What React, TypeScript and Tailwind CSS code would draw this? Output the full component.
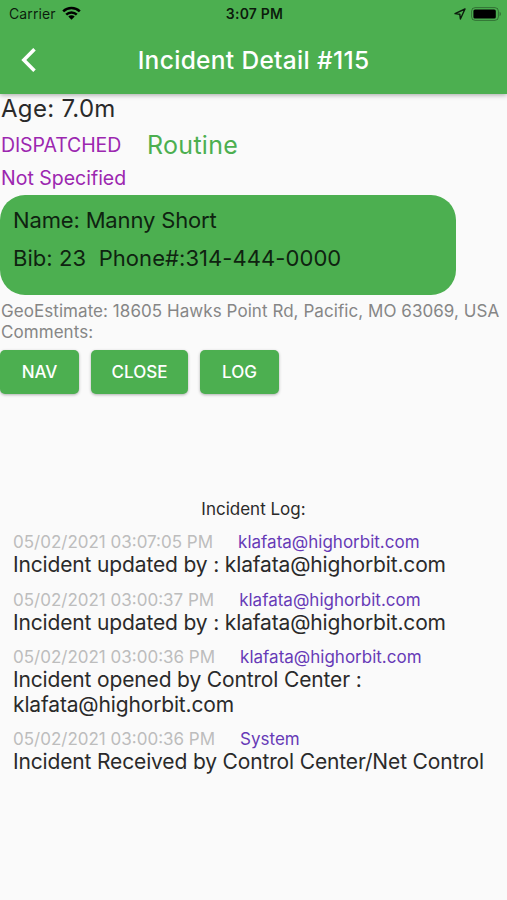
interface LogEntry {
  id: number
  time: string
  user: string
  message: string
}

const logEntries: LogEntry[] = [
  {
    id: 1,
    time: "05/02/2021 03:07:05 PM",
    user: "klafata@highorbit.com",
    message: "Incident updated by : klafata@highorbit.com",
  },
  {
    id: 2,
    time: "05/02/2021 03:00:37 PM",
    user: "klafata@highorbit.com",
    message: "Incident updated by : klafata@highorbit.com",
  },
  {
    id: 3,
    time: "05/02/2021 03:00:36 PM",
    user: "klafata@highorbit.com",
    message: "Incident opened by Control Center : klafata@highorbit.com",
  },
  {
    id: 4,
    time: "05/02/2021 03:00:36 PM",
    user: "System",
    message: "Incident Received by Control Center/Net Control",
  },
]

function StatusBar() {
  return (
    <div className="grid h-[25px] grid-cols-3 items-center pt-[3px] text-black/85">
      <div className="flex items-center gap-[6px] pl-[9px]">
        <span className="text-[14px] leading-none tracking-[0.1px]">Carrier</span>
        <svg className="mt-[-2px] h-[14px] w-[19px] text-black" viewBox="0 0 19 14" fill="none" stroke="currentColor" strokeWidth="2.5">
          <path d="M1.2 5.4a11.8 11.8 0 0 1 16.6 0" />
          <path d="M4.2 8.6a7.6 7.6 0 0 1 10.6 0" />
          <path d="M9.5 13.7 6.3 10.5a4.5 4.5 0 0 1 6.4 0Z" fill="currentColor" stroke="none" />
        </svg>
      </div>
      <span className="pl-[2px] text-center text-[14px] leading-none font-semibold tracking-[0.2px]">3:07 PM</span>
      <div className="flex items-center justify-end gap-[5px] pr-[6px]">
        <svg className="h-[12px] w-[12px]" viewBox="0 0 12 12" fill="none" stroke="currentColor" strokeWidth="1.4" strokeLinejoin="round">
          <path d="M11 1 1 5.6l4.8.6.6 4.8Z" />
        </svg>
        <svg className="mt-[-1px] h-[14px] w-[30px]" viewBox="0 0 30 14">
          <rect x="0.6" y="0.6" width="26.8" height="12.8" rx="3.6" fill="none" stroke="black" strokeOpacity="0.35" />
          <rect x="2.4" y="2.4" width="22.4" height="9.2" rx="1.6" fill="black" />
          <path d="M28.6 4.8c1.6.7 1.6 3.7 0 4.4Z" fill="black" fillOpacity="0.4" />
        </svg>
      </div>
    </div>
  )
}

function ActionButton({ label, className }: { label: string; className: string }) {
  return (
    <button
      className={`h-[44px] rounded-[5px] bg-[#4caf50] pt-[2px] text-[17px] font-medium text-white shadow-[0_1px_3px_rgba(0,0,0,0.3)] ${className}`}
    >
      {label}
    </button>
  )
}

export default function App() {
  return (
    <div className="h-[900px] w-[507px] overflow-hidden bg-[#fafafa] font-['Inter',sans-serif] text-[#2a2a2a]">
      <header className="relative h-[94px] bg-[#4caf50] shadow-[0_1px_5px_rgba(0,0,0,0.35)]">
        <StatusBar />
        <div className="grid h-[69px] grid-cols-[56px_1fr_56px] items-center">
          <button className="flex justify-center text-white">
            <svg className="h-[24px] w-[15px]" viewBox="0 0 15 24" fill="none" stroke="currentColor" strokeWidth="3.5">
              <path d="M13.5 1.2 2.8 12l10.7 10.8" />
            </svg>
          </button>
          <h1 className="pt-px text-center text-[24.5px] font-medium tracking-[0.32px] text-white">Incident Detail #115</h1>
        </div>
      </header>

      <div className="pl-px">
        <div className="h-[32px] text-[24px] leading-[30px] tracking-[0.3px]">Age: 7.0m</div>
        <div className="flex h-[38px] items-center pt-px text-[#9c27b0]">
          <span className="w-[146px] text-[19.5px] tracking-[-0.1px]">DISPATCHED</span>
          <span className="text-[25px] tracking-[0.3px] text-[#4caf50]">Routine</span>
        </div>
        <div className="h-[31px] text-[19.5px] leading-[29px]">
          <span className="text-[#9c27b0]">Not Specified</span>
        </div>
      </div>

      {/* Reporter card */}
      <div className="h-[100px] w-[456px] rounded-[25px] bg-[#4caf50] pt-[6px] pl-[13px] text-[22px] leading-[38px] whitespace-pre text-[#0f2310]">
        <div className="tracking-[-0.15px]">Name: Manny Short</div>
        <div className="tracking-[0.06px]">Bib: 23  Phone#:314-444-0000</div>
      </div>

      <div className="h-[55px] pt-[6px] pl-px text-[17px] leading-[21px] tracking-[0.06px] whitespace-nowrap text-[#868686]">
        <div>GeoEstimate: 18605 Hawks Point Rd, Pacific, MO 63069, USA</div>
        <div>Comments:</div>
      </div>

      <div className="flex gap-[12px]">
        <ActionButton label="NAV" className="w-[79px]" />
        <ActionButton label="CLOSE" className="w-[97px]" />
        <ActionButton label="LOG" className="w-[79px]" />
      </div>

      <h2 className="mt-[105px] text-center text-[17px] leading-[21px]">Incident Log:</h2>

      <ul className="mt-[12px] space-y-[12px] px-[13px]">
        {logEntries.map((entry) => (
          <li key={entry.id}>
            <div className="flex gap-[25px] text-[17px] leading-[21px]">
              <span className="text-[#bdbdbd]">{entry.time}</span>
              <span className="text-[#673ab7]">{entry.user}</span>
            </div>
            <p className="text-[21px] leading-[24.5px] tracking-[-0.15px]">{entry.message}</p>
          </li>
        ))}
      </ul>
    </div>
  )
}
